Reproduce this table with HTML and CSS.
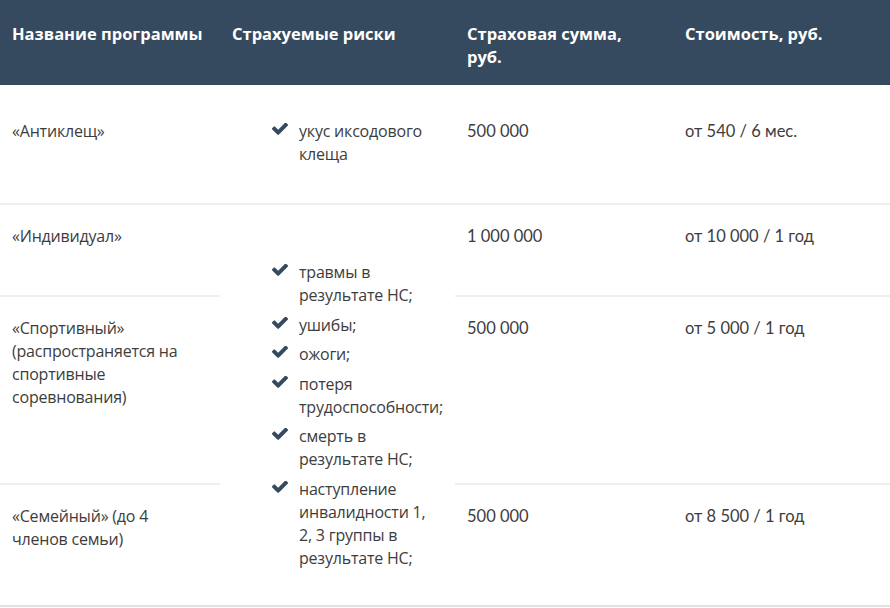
FILE: index.html
```html
<!DOCTYPE html>
<html lang="ru">
<head>
<meta charset="utf-8">
<link rel="stylesheet" href="styles.css">
</head>
<body>
<table class="tbl">
  <colgroup>
    <col class="c1"><col class="c2"><col class="c3"><col class="c4">
  </colgroup>
  <thead>
    <tr class="head">
      <th>Название программы</th>
      <th>Страхуемые риски</th>
      <th class="narrow">Страховая сумма, руб.</th>
      <th>Стоимость, руб.</th>
    </tr>
  </thead>
  <tbody>
    <tr class="r1">
      <td class="name">«Антиклещ»</td>
      <td class="risks">
        <ul class="list">
          <li><svg class="chk" viewBox="121 382 1550 1140"><path d="M1671 566q0 40-28 68l-724 724-136 136q-28 28-68 28t-68-28l-136-136-362-362q-28-28-28-68t28-68l136-136q28-28 68-28t68 28l294 295 656-657q28-28 68-28t68 28l136 136q28 28 28 68z"/></svg><span>укус иксодового клеща</span></li>
        </ul>
      </td>
      <td class="num">500 000</td>
      <td class="num">от 540 / 6 мес.</td>
    </tr>
    <tr class="r2">
      <td class="name">«Индивидуал»</td>
      <td class="risks span" rowspan="3">
        <ul class="list">
          <li><svg class="chk" viewBox="121 382 1550 1140"><path d="M1671 566q0 40-28 68l-724 724-136 136q-28 28-68 28t-68-28l-136-136-362-362q-28-28-28-68t28-68l136-136q28-28 68-28t68 28l294 295 656-657q28-28 68-28t68 28l136 136q28 28 28 68z"/></svg><span>травмы в результате НС;</span></li>
          <li><svg class="chk" viewBox="121 382 1550 1140"><path d="M1671 566q0 40-28 68l-724 724-136 136q-28 28-68 28t-68-28l-136-136-362-362q-28-28-28-68t28-68l136-136q28-28 68-28t68 28l294 295 656-657q28-28 68-28t68 28l136 136q28 28 28 68z"/></svg><span>ушибы;</span></li>
          <li><svg class="chk" viewBox="121 382 1550 1140"><path d="M1671 566q0 40-28 68l-724 724-136 136q-28 28-68 28t-68-28l-136-136-362-362q-28-28-28-68t28-68l136-136q28-28 68-28t68 28l294 295 656-657q28-28 68-28t68 28l136 136q28 28 28 68z"/></svg><span>ожоги;</span></li>
          <li><svg class="chk" viewBox="121 382 1550 1140"><path d="M1671 566q0 40-28 68l-724 724-136 136q-28 28-68 28t-68-28l-136-136-362-362q-28-28-28-68t28-68l136-136q28-28 68-28t68 28l294 295 656-657q28-28 68-28t68 28l136 136q28 28 28 68z"/></svg><span>потеря трудоспособности;</span></li>
          <li><svg class="chk" viewBox="121 382 1550 1140"><path d="M1671 566q0 40-28 68l-724 724-136 136q-28 28-68 28t-68-28l-136-136-362-362q-28-28-28-68t28-68l136-136q28-28 68-28t68 28l294 295 656-657q28-28 68-28t68 28l136 136q28 28 28 68z"/></svg><span>смерть в результате НС;</span></li>
          <li><svg class="chk" viewBox="121 382 1550 1140"><path d="M1671 566q0 40-28 68l-724 724-136 136q-28 28-68 28t-68-28l-136-136-362-362q-28-28-28-68t28-68l136-136q28-28 68-28t68 28l294 295 656-657q28-28 68-28t68 28l136 136q28 28 28 68z"/></svg><span>наступление инвалидности 1, 2,&nbsp;3 группы в результате НС;</span></li>
        </ul>
      </td>
      <td class="num">1 000 000</td>
      <td class="num">от 10 000 / 1 год</td>
    </tr>
    <tr class="r3">
      <td class="name">«Спортивный» (распространяется на спортивные соревнования)</td>
      <td class="num">500 000</td>
      <td class="num">от 5 000 / 1 год</td>
    </tr>
    <tr class="r4">
      <td class="name">«Семейный» (до 4 членов семьи)</td>
      <td class="num">500 000</td>
      <td class="num">от 8 500 / 1 год</td>
    </tr>
  </tbody>
</table>
</body>
</html>
```

FILE: styles.css
```css
html, body {
  margin: 0;
  padding: 0;
  background: #ffffff;
}

.tbl {
  width: 890px;
  border-collapse: collapse;
  table-layout: fixed;
  font-family: "Open Sans", "Noto Sans", sans-serif;
  font-size: 16px;
  letter-spacing: -0.2px;
  line-height: 23px;
  color: #3d3d3d;
}

.c1 { width: 220px; }
.c2 { width: 235px; }
.c3 { width: 218px; }
.c4 { width: 217px; }

.head {
  background: #354a5f;
  height: 85px;
}

.head th {
  text-align: left;
  vertical-align: top;
  color: #ffffff;
  font-weight: 700;
  font-size: 16.5px;
  letter-spacing: 0;
  padding: 22px 8px 0 12px;
}

.head th.narrow {
  padding-right: 40px;
}

.tbl td {
  vertical-align: top;
  padding: 20px 12px 0 12px;
  border-bottom: 2px solid #efefef;
}

.tbl td.name {
  padding-right: 20px;
}

.r1 { height: 119px; }
.r2 { height: 92px; }
.r3 { height: 188px; }
.r4 { height: 122px; }

.r1 td { padding-top: 35px; }

.r4 td { border-bottom-color: #e2e2e2; }

.tbl td.risks {
  padding-left: 52px;
  padding-right: 8px;
}

.tbl td.span {
  padding-top: 56px;
  border-bottom-color: #e2e2e2;
}

.num {
  font-family: "Lato", "Open Sans", sans-serif;
  font-size: 16.5px;
  letter-spacing: 0;
}

.list {
  list-style: none;
  margin: 0;
  padding: 0;
  display: flex;
  flex-direction: column;
  gap: 6.6px;
}

.list li {
  display: flex;
  align-items: flex-start;
  gap: 11px;
}

.chk {
  flex: none;
  width: 16px;
  height: 12px;
  margin-top: 3px;
  fill: #354a5f;
}

.list li span {
  flex: 1;
}
```
